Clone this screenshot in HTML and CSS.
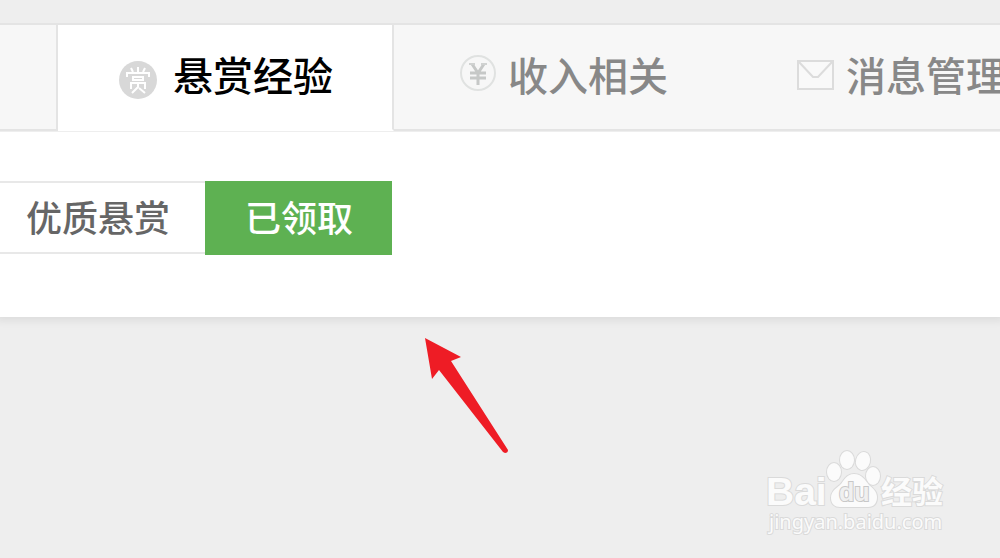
FILE: index.html
```html
<!DOCTYPE html>
<html lang="zh-CN">
<head>
  <meta charset="UTF-8">
  <meta name="viewport" content="width=device-width, initial-scale=1.0">
  <title>悬赏经验</title>
  <link rel="stylesheet" href="styles.css">
</head>
<body>
  <nav class="tabs">
    <div class="tab-edge"></div>
    <a class="tab active" href="#reward">
      <svg class="icon" viewBox="0 0 38 48" aria-hidden="true">
        <circle cx="19" cy="27" r="19" fill="#d8d8d8"/>
        <g fill="none" stroke="#fff" stroke-width="2">
          <path d="M19 14v6M12 15l2 4M26 15l-2 4M8 24v-4h22v4"/>
          <path d="M14 24h10v3H14zM12 36v-6h14v6M19 30v4l-6 6M20 35l6 5"/>
        </g>
      </svg>
      <span>悬赏经验</span>
    </a>
    <a class="tab" href="#income">
      <svg class="icon" viewBox="0 0 38 48" aria-hidden="true">
        <circle cx="20" cy="20" r="17" fill="none" stroke="#e0e2e1" stroke-width="2"/>
        <path d="M14 11l6 9 6-9M20 20v12M12 20h16M12 25h16" fill="none" stroke="#c6c8c7" stroke-width="3"/>
        <path d="M11 11h6M23 11h6" stroke="#d0d2d1" stroke-width="2"/>
      </svg>
      <span>收入相关</span>
    </a>
    <a class="tab" href="#message">
      <svg class="icon" viewBox="0 0 38 48" aria-hidden="true">
        <path d="M2 8h35v28H2z" fill="#f9f9f9" stroke="#dcdcdc" stroke-width="2"/>
        <path d="M3 9l14 15h5L36 9" fill="none" stroke="#dcdcdc" stroke-width="2"/>
      </svg>
      <span>消息管理</span>
    </a>
  </nav>

  <main class="panel">
    <div class="filter">
      <button type="button">优质悬赏</button>
      <button type="button" class="current">已领取</button>
    </div>
  </main>

  <svg class="arrow" viewBox="0 0 86 118" aria-hidden="true">
    <path d="M1 2l36 19-10 4 57 89q0 3-3 3l-2-1-64-82-7 9z" fill="#ee1c25"/>
  </svg>

  <!-- 水印 -->
  <svg class="watermark" viewBox="0 0 190 96" role="img" aria-label="Baidu 经验">
    <g fill="#fbfbfb" stroke="#dadada" stroke-width="2" paint-order="stroke">
      <text class="brand" x="4" y="57">Bai</text>
      <ellipse cx="72" cy="24" rx="7" ry="9"/>
      <ellipse cx="85" cy="12" rx="7" ry="9"/>
      <ellipse cx="101" cy="13" rx="7" ry="9" transform="rotate(15 101 13)"/>
      <ellipse cx="111" cy="28" rx="7" ry="9"/>
      <path d="M92 26c-8 0-10 7-14 11-5 4-9 7-9 13s4 9 9 9h28c6 0 9-4 9-10 0-5-4-9-8-12-4-5-7-11-15-11z"/>
      <text class="du" x="77" y="53">du</text>
      <text class="cn" x="119" y="55">经验</text>
      <text class="url" x="7" y="81">jingyan.baidu.com</text>
    </g>
  </svg>
</body>
</html>
```

FILE: styles.css
```css
* {
  box-sizing: border-box;
  margin: 0;
  padding: 0;
}
body {
  position: relative;
  min-height: 100vh;
  padding-top: 23px;
  overflow: hidden;
  background: #eee;
  font-family: "Noto Sans CJK SC", sans-serif;
  font-weight: 500;
}

/* 顶部导航 */
.tabs {
  position: relative;
  z-index: 1;
  display: flex;
  height: 108px;
  overflow: hidden;
  background: #f7f7f7;
  border-top: 2px solid #e4e4e4;
}
.tab-edge {
  flex: none;
  width: 58px;
  border-right: 2px solid #e4e4e4;
  border-bottom: 2px solid #e4e4e4;
}
.tab {
  display: flex;
  flex: none;
  align-items: center;
  gap: 12px;
  padding: 0 64px;
  border-bottom: 2px solid #e4e4e4;
  color: #888;
  font-size: 40px;
  line-height: 60px;
  text-decoration: none;
  white-space: nowrap;
}
.tab span {
  padding-bottom: 6px;
}
.tab:last-child {
  flex: 1 0 auto;
}
.tab.active {
  gap: 16px;
  padding: 0 59px 0 61px;
  background: #fff;
  border-right: 2px solid #e4e4e4;
  border-bottom-color: #fff;
  color: #000;
}
.icon {
  flex: none;
  width: 38px;
  height: 48px;
}

/* 内容区 */
.panel {
  padding: 49px 0 62px;
  background: #fff;
  border-top: 1px solid #eee;
  box-shadow: 0 0 8px 4px rgba(0, 0, 0, 0.07);
}
.filter {
  display: flex;
  align-items: flex-start;
}
.filter button {
  height: 73px;
  padding: 0 35px 4px 26px;
  background: #fff;
  border: solid #e8e8e8;
  border-width: 2px 0;
  color: #666;
  font-family: inherit;
  font-size: 36px;
  font-weight: inherit;
  line-height: 54px;
}
.filter .current {
  height: 74px;
  padding: 0 39px 5px 40px;
  background: #5eb152;
  border: 0;
  color: #fff;
}

.arrow {
  position: absolute;
  top: 336px;
  left: 424px;
  width: 86px;
  height: 118px;
}

.watermark {
  position: absolute;
  right: 48px;
  bottom: 14px;
  width: 190px;
  height: 96px;
}
.brand {
  font: bold 39px "Liberation Sans", sans-serif;
}
.cn {
  font: bold 31px "Noto Sans CJK SC", sans-serif;
}
.url {
  font: 20px "Noto Sans", sans-serif;
}
.du {
  fill: #f0f0f0;
  stroke: #c8c8c8;
  font: bold 25px "Liberation Sans", sans-serif;
}
```
